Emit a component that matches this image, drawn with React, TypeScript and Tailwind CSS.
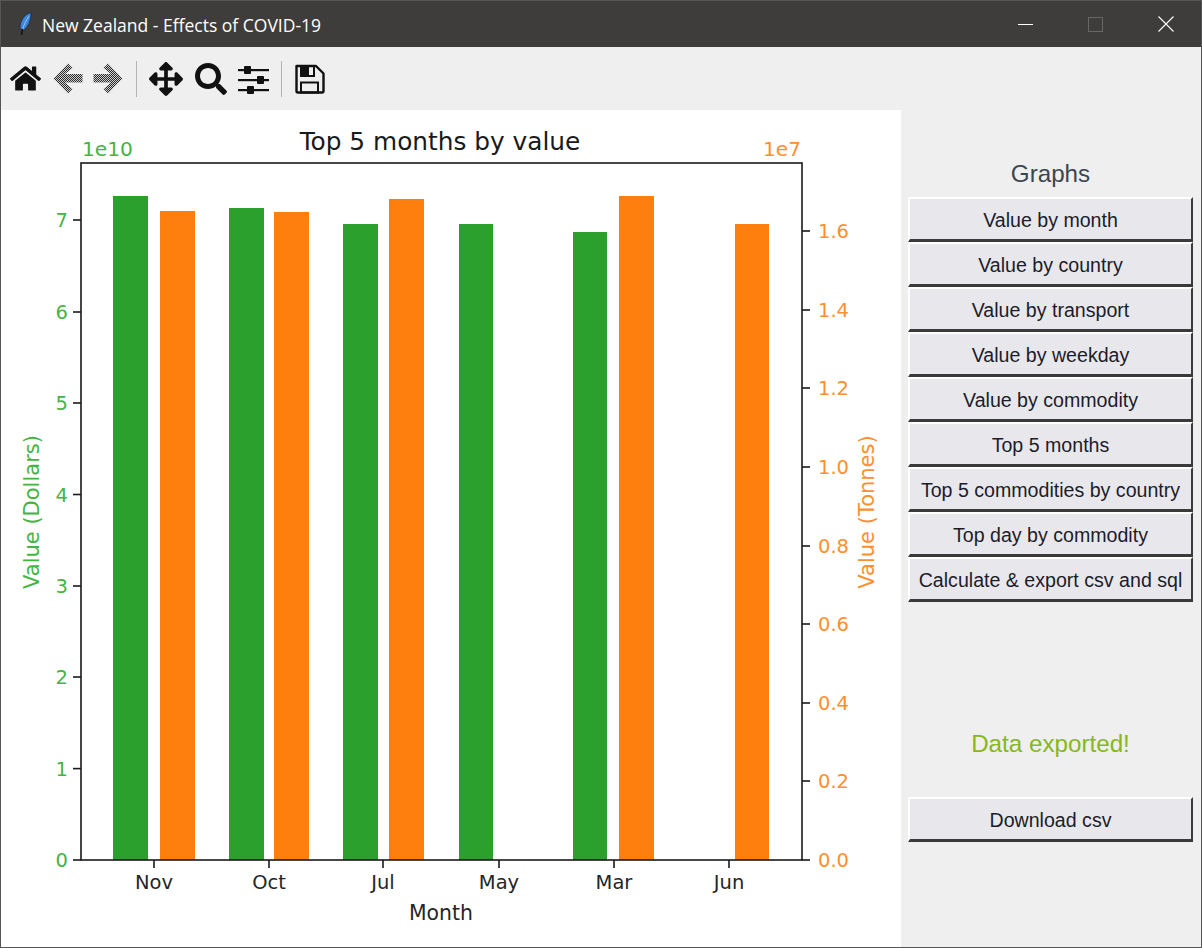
import { FaHome, FaArrowsAlt, FaSearch } from 'react-icons/fa';

const GREEN = '#2ca02c';
const ORANGE = '#ff7f0e';
const GREEN_TEXT = '#43b543';
const ORANGE_TEXT = '#ff8f2e';
const SPINE = '#1a1a1a';

const graphButtons = [
  'Value by month',
  'Value by country',
  'Value by transport',
  'Value by weekday',
  'Value by commodity',
  'Top 5 months',
  'Top 5 commodities by country',
  'Top day by commodity',
  'Calculate & export csv and sql',
];

// page coordinates of the plot, viewBox below keeps them 1:1
const AX = { left: 81, right: 802, top: 163, bottom: 860 };

const months = [
  { name: 'Nov', tick: 154, green: [113, 148, 196], orange: [160, 195, 211] },
  { name: 'Oct', tick: 269, green: [229, 264, 208], orange: [274, 309, 212] },
  { name: 'Jul', tick: 383, green: [343, 378, 224], orange: [389, 424, 199] },
  { name: 'May', tick: 499, green: [459, 493, 224] },
  { name: 'Mar', tick: 614, green: [573, 607, 232], orange: [619, 654, 196] },
  { name: 'Jun', tick: 729, orange: [735, 769, 224] },
];

const leftTicks = [
  ['0', 860], ['1', 768.6], ['2', 677], ['3', 586], ['4', 494.5], ['5', 403], ['6', 312], ['7', 220],
] as const;
const rightTicks = [
  ['0.0', 860], ['0.2', 781], ['0.4', 703], ['0.6', 624], ['0.8', 546],
  ['1.0', 467], ['1.2', 388], ['1.4', 310], ['1.6', 231],
] as const;

function Chart() {
  const font = { fontFamily: 'DejaVu Sans, sans-serif' };
  return (
    <svg viewBox="1 110 900 837" className="w-[900px] h-[837px] block" style={font}>
      {months.map((m) => (
        <g key={m.name}>
          {m.green && (
            <rect x={m.green[0]} y={m.green[2]} width={m.green[1] - m.green[0]} height={AX.bottom - m.green[2]} fill={GREEN} />
          )}
          {m.orange && (
            <rect x={m.orange[0]} y={m.orange[2]} width={m.orange[1] - m.orange[0]} height={AX.bottom - m.orange[2]} fill={ORANGE} />
          )}
          <line x1={m.tick} x2={m.tick} y1={AX.bottom} y2={AX.bottom + 8} stroke={SPINE} strokeWidth="1.6" />
          <text x={m.tick} y={889} textAnchor="middle" fontSize="19.5" fill="#262626">{m.name}</text>
        </g>
      ))}
      <rect x={AX.left} y={AX.top} width={AX.right - AX.left} height={AX.bottom - AX.top} fill="none" stroke={SPINE} strokeWidth="1.6" />
      {leftTicks.map(([label, y]) => (
        <g key={label}>
          <line x1={AX.left - 8} x2={AX.left} y1={y} y2={y} stroke={SPINE} strokeWidth="1.6" />
          <text x={68} y={y + 7} textAnchor="end" fontSize="19.5" fill={GREEN_TEXT}>{label}</text>
        </g>
      ))}
      {rightTicks.map(([label, y]) => (
        <g key={label}>
          <line x1={AX.right} x2={AX.right + 8} y1={y} y2={y} stroke={SPINE} strokeWidth="1.6" />
          <text x={818} y={y + 7} fontSize="19.5" fill={ORANGE_TEXT}>{label}</text>
        </g>
      ))}
      <text x={82} y={156} fontSize="20.2" fill={GREEN_TEXT}>1e10</text>
      <text x={801} y={156} textAnchor="end" fontSize="20.2" fill={ORANGE_TEXT}>1e7</text>
      <text x={440} y={150} textAnchor="middle" fontSize="24.8" fill="#1a1a1a">Top 5 months by value</text>
      <text x={441} y={920} textAnchor="middle" fontSize="20.4" fill="#262626">Month</text>
      <text transform="translate(39 512) rotate(-90)" textAnchor="middle" fontSize="21" fill={GREEN_TEXT}>Value (Dollars)</text>
      <text transform="translate(874 512) rotate(-90)" textAnchor="middle" fontSize="21" fill={ORANGE_TEXT}>Value (Tonnes)</text>
    </svg>
  );
}

function TkButton({ label }: { label: string }) {
  return (
    <button className="w-[285px] h-[45px] pt-[4px] bg-[#e8e8ec] border-t-2 border-l-2 border-r-2 border-b-[3px] border-t-white border-l-white border-r-[#3a3a3a] border-b-[#3a3a3a] text-[19.6px] text-[#1c1c2a] whitespace-nowrap flex items-center justify-center">
      {label}
    </button>
  );
}

function Feather() {
  return (
    <svg width="16" height="24" viewBox="0 0 16 24">
      <path d="M14 0.5C8 2 3 8 3 16l3 2.5c5-3 8-10 8-18z" fill="#3f85d8" stroke="#16243a" strokeWidth="0.7" />
      <path d="M12 4C9.5 8 7 12 5.5 18" fill="none" stroke="#9cc8f2" strokeWidth="0.9" />
      <path d="M5.5 17l-1 6" fill="none" stroke="#101010" strokeWidth="1.5" />
    </svg>
  );
}

function ToolArrow({ flip, className }: { flip?: boolean; className: string }) {
  return (
    <svg width="30" height="31" viewBox="0 0 30 31" className={className}>
      <path
        d="M15 0.5 L19.5 5 L12 11 H29.5 V19.5 H12 L19.5 26 L15 30.5 L0.5 15.5 Z"
        fill="url(#dither)"
        transform={flip ? 'matrix(-1 0 0 1 30 0)' : undefined}
      />
    </svg>
  );
}

function SlidersIcon({ className }: { className: string }) {
  return (
    <svg width="31" height="30" viewBox="0 0 31 30" className={className} fill="#111">
      <rect x="0" y="5" width="31" height="2.2" />
      <rect x="0" y="15" width="31" height="2.2" />
      <rect x="0" y="25" width="31" height="2.2" />
      <rect x="6" y="2" width="7" height="8" rx="1" />
      <rect x="19" y="12" width="7" height="8" rx="1" />
      <rect x="9" y="22" width="7" height="8" rx="1" />
    </svg>
  );
}

function SaveIcon({ className }: { className: string }) {
  return (
    <svg width="31" height="30" viewBox="0 0 31 30" className={className} fill="none" stroke="#111" strokeWidth="2.4">
      <path d="M2.5 2 H22 L29.5 9.5 V27 Q29.5 28.5 28 28.5 H4 Q2.5 28.5 2.5 27 Z" strokeLinejoin="round" />
      <path d="M14 2 H20 V12 H7 V2" strokeWidth="2" />
      <rect x="7" y="2" width="8" height="10" fill="#111" stroke="none" />
      <rect x="7" y="18.5" width="17" height="10" strokeWidth="2" />
    </svg>
  );
}

function Divider() {
  return <div className="w-px h-[36px] bg-[#b4b4b4]" />;
}

export default function App() {
  return (
    <div className="w-[1202px] h-[948px] border border-[#555] bg-[#efefef] flex flex-col overflow-hidden" style={{ fontFamily: '"Liberation Sans", Arial, sans-serif' }}>
      <div className="h-[46px] bg-[#3f3d3b] flex items-center shrink-0">
        <div className="ml-[16px] w-[25px]">
          <Feather />
        </div>
        <span className="text-[17.5px] text-white pt-[2px]" style={{ fontFamily: '"Open Sans", sans-serif' }}>New Zealand - Effects of COVID-19</span>
        <div className="ml-auto flex items-center">
          <div className="w-[15px] h-px bg-white mr-[55px]" />
          <div className="w-[15px] h-[15px] border border-[#686664] mr-[55px]" />
          <svg width="16" height="16" viewBox="0 0 16 16" className="mr-[27px]">
            <path d="M.5.5l15 15M15.5.5l-15 15" stroke="#fff" strokeWidth="1.1" />
          </svg>
        </div>
      </div>

      <div className="h-[63px] bg-[#efefef] flex items-center shrink-0 pl-[9px] text-[#111]">
        <svg width="0" height="0" className="absolute">
          <defs>
            <pattern id="dither" width="2" height="2" patternUnits="userSpaceOnUse">
              <rect width="2" height="2" fill="#cfcfcf" />
              <rect width="1" height="1" fill="#2a2a2a" />
              <rect x="1" y="1" width="1" height="1" fill="#2a2a2a" />
            </pattern>
          </defs>
        </svg>
        <FaHome size={31} />
        <ToolArrow className="ml-[12px]" />
        <ToolArrow flip className="ml-[10px]" />
        <div className="ml-[13px]"><Divider /></div>
        <FaArrowsAlt size={34} className="ml-[12px]" />
        <FaSearch size={32} className="ml-[12px]" />
        <SlidersIcon className="ml-[11px]" />
        <div className="ml-[12px]"><Divider /></div>
        <SaveIcon className="ml-[12px]" />
      </div>

      <div className="flex flex-1 min-h-0">
        <div className="w-[900px] bg-white shrink-0">
          <Chart />
        </div>
        <div className="flex-1 flex flex-col pl-[7px]">
          <div className="w-[285px] text-center text-[24.2px] text-[#3c4650] mt-[50px] h-[37px] leading-[28px]">Graphs</div>
          {graphButtons.map((label) => (
            <TkButton key={label} label={label} />
          ))}
          <div className="w-[285px] text-center text-[24.2px] text-[#86b81c] mt-[128px] leading-[28px]">Data exported!</div>
          <div className="mt-[39px]">
            <TkButton label="Download csv" />
          </div>
        </div>
      </div>
    </div>
  );
}
